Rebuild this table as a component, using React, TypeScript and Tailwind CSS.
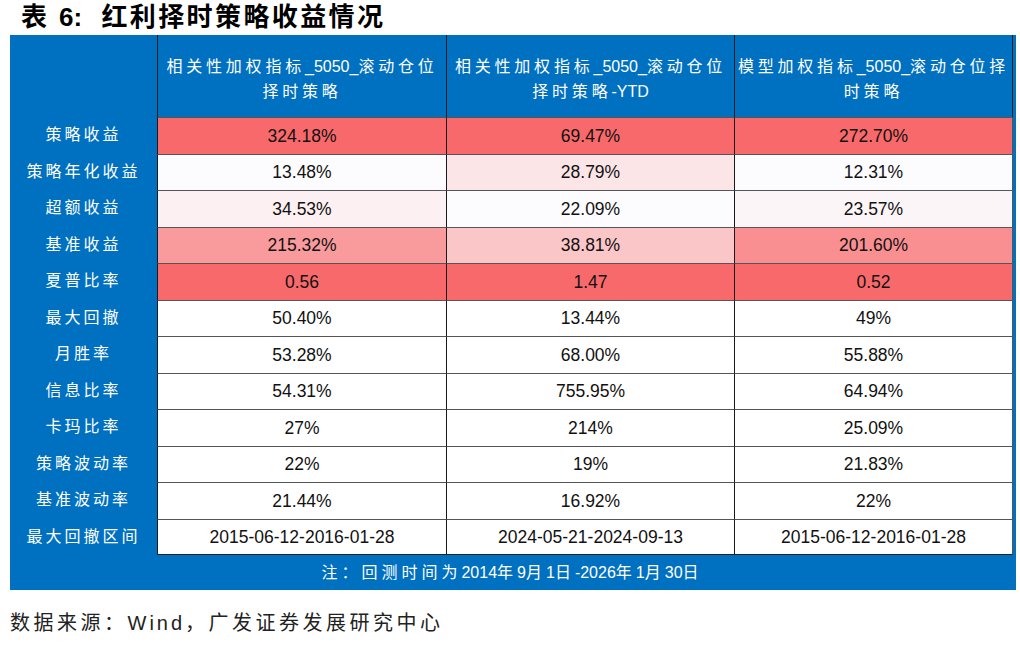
const cjk = "font-['Liberation_Sans','Noto_Sans_CJK_SC',sans-serif]";

type Cell = { v: string; bg: string };

const rows: { label: string; cells: Cell[] }[] = [
  { label: "策略收益", cells: [{ v: "324.18%", bg: "bg-[#f8696b]" }, { v: "69.47%", bg: "bg-[#f8696b]" }, { v: "272.70%", bg: "bg-[#f8696b]" }] },
  { label: "策略年化收益", cells: [{ v: "13.48%", bg: "bg-[#fcfcff]" }, { v: "28.79%", bg: "bg-[#fce5e7]" }, { v: "12.31%", bg: "bg-[#fcfcff]" }] },
  { label: "超额收益", cells: [{ v: "34.53%", bg: "bg-[#fcf0f2]" }, { v: "22.09%", bg: "bg-[#fcfcff]" }, { v: "23.57%", bg: "bg-[#fcf5f7]" }] },
  { label: "基准收益", cells: [{ v: "215.32%", bg: "bg-[#f99b9d]" }, { v: "38.81%", bg: "bg-[#fbc6c8]" }, { v: "201.60%", bg: "bg-[#f98f91]" }] },
  { label: "夏普比率", cells: [{ v: "0.56", bg: "bg-[#f8696b]" }, { v: "1.47", bg: "bg-[#f8696b]" }, { v: "0.52", bg: "bg-[#f8696b]" }] },
  { label: "最大回撤", cells: [{ v: "50.40%", bg: "bg-white" }, { v: "13.44%", bg: "bg-white" }, { v: "49%", bg: "bg-white" }] },
  { label: "月胜率", cells: [{ v: "53.28%", bg: "bg-white" }, { v: "68.00%", bg: "bg-white" }, { v: "55.88%", bg: "bg-white" }] },
  { label: "信息比率", cells: [{ v: "54.31%", bg: "bg-white" }, { v: "755.95%", bg: "bg-white" }, { v: "64.94%", bg: "bg-white" }] },
  { label: "卡玛比率", cells: [{ v: "27%", bg: "bg-white" }, { v: "214%", bg: "bg-white" }, { v: "25.09%", bg: "bg-white" }] },
  { label: "策略波动率", cells: [{ v: "22%", bg: "bg-white" }, { v: "19%", bg: "bg-white" }, { v: "21.83%", bg: "bg-white" }] },
  { label: "基准波动率", cells: [{ v: "21.44%", bg: "bg-white" }, { v: "16.92%", bg: "bg-white" }, { v: "22%", bg: "bg-white" }] },
  { label: "最大回撤区间", cells: [{ v: "2015-06-12-2016-01-28", bg: "bg-white" }, { v: "2024-05-21-2024-09-13", bg: "bg-white" }, { v: "2015-06-12-2016-01-28", bg: "bg-white" }] },
];

// latin runs are not letter-spaced in the source, only the CJK ones
function Mixed({ text }: { text: string }) {
  const parts = text.split(/([A-Za-z0-9_\-.%]+)/);
  return (
    <>
      {parts.map((p, i) =>
        i % 2 === 1 ? (
          <span key={i} className="tracking-normal">{p}</span>
        ) : (
          <span key={i}>{p}</span>
        )
      )}
    </>
  );
}

const headers = [
  ["相关性加权指标_5050_滚动仓位", "择时策略"],
  ["相关性加权指标_5050_滚动仓位", "择时策略-YTD"],
  ["模型加权指标_5050_滚动仓位择", "时策略"],
];

const cols = "grid grid-cols-[147px_289px_288px_279px]";

export default function App() {
  return (
    <div className={`w-[1020px] h-[646px] bg-white ${cjk}`}>
      <div className="h-[35px] pl-[21px] flex items-center pb-[2px]">
        <h1 className="text-[26px] font-bold text-black tracking-[2.4px] leading-none">
          表 <span className="tracking-normal">6:</span>&nbsp; 红利择时策略收益情况
        </h1>
      </div>

      <div className="ml-[10px] w-[1006px] bg-[#0070c0] pr-[2px]">
        <div className={`${cols} h-[82px]`}>
          <div />
          {headers.map((h, i) => (
            <div
              key={i}
              className="border-l-[1.5px] border-[#1a1a1a] last:border-r-[1.5px] flex flex-col items-center justify-center text-white text-[16px] leading-[25px] tracking-[3.8px] pt-[6px] whitespace-nowrap"
            >
              <span><Mixed text={h[0]} /></span>
              <span><Mixed text={h[1]} /></span>
            </div>
          ))}
        </div>

        {rows.map((r, ri) => (
          <div key={ri} className={`${cols} h-[36.5px]`}>
            <div className="flex items-center justify-center text-white text-[16px] tracking-[3px]">
              {r.label}
            </div>
            {r.cells.map((c, ci) => (
              <div
                key={ci}
                className={`${c.bg} flex items-center justify-center text-[#111] text-[17.5px] border-l-[1.5px] border-t border-l-[#1a1a1a] border-t-[#555] ${ci === 2 ? "border-r-[1.5px] border-r-[#555]" : ""} ${ri === rows.length - 1 ? "border-b border-b-[#222]" : ""}`}
              >
                {c.v}
              </div>
            ))}
          </div>
        ))}

        <div className="h-[35px] flex items-center justify-center text-white text-[16px] tracking-[4px]">
          <Mixed text="注：回测时间为2014年9月1日-2026年1月30日" />
        </div>
      </div>

      <div className="pl-[10px] pt-[18px] text-[20px] tracking-[3.5px] text-[#222]">
        数据来源：<span className="tracking-[3px]">Wind</span>，广发证券发展研究中心
      </div>
    </div>
  );
}
